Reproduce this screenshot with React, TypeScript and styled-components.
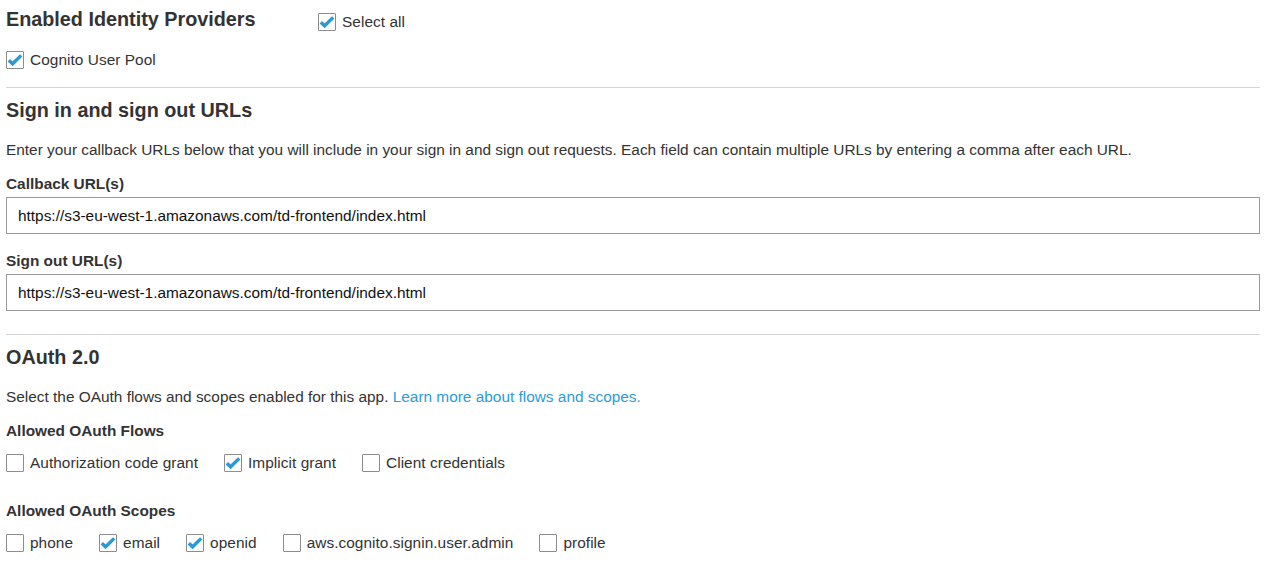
import React, { useState } from 'react';
import styled, { createGlobalStyle } from 'styled-components';

const GlobalStyle = createGlobalStyle`
  html, body {
    margin: 0;
    padding: 0;
    background: #ffffff;
  }
  body {
    font-family: "Liberation Sans", Arial, sans-serif;
    color: #333333;
    font-size: 15.4px;
  }
`;

const Page = styled.div`
  padding: 0 18px 0 6px;
`;

const TopRow = styled.div`
  display: flex;
  align-items: flex-start;
`;

const Heading = styled.h2<{ $top?: number }>`
  margin: ${p => p.$top ?? 10}px 0 0 0;
  font-size: 19.8px;
  line-height: 24px;
  font-weight: bold;
  color: #333333;
`;

const TopHeading = styled(Heading)`
  width: 312px;
  flex-shrink: 0;
`;

const Divider = styled.hr<{ $top: number }>`
  border: none;
  border-top: 1px solid #d5d5d5;
  margin: ${p => p.$top}px 0 0 0;
  height: 0;
`;

const Paragraph = styled.p`
  margin: 18px 0 0 0;
  line-height: 20px;
  font-size: 15.4px;
`;

const Link = styled.a`
  color: #2b9cd8;
  text-decoration: none;
`;

const Label = styled.div<{ $top: number }>`
  margin-top: ${p => p.$top}px;
  font-weight: bold;
  line-height: 20px;
  font-size: 15.4px;
`;

const TextInput = styled.input`
  display: block;
  box-sizing: border-box;
  width: 100%;
  height: 37px;
  margin-top: 3px;
  padding: 0 11px;
  border: 1px solid #9a9a9a;
  border-radius: 0;
  font-family: "Liberation Sans", Arial, sans-serif;
  font-size: 15.4px;
  color: #111111;
  outline: none;
`;

const CheckRow = styled.div<{ $top: number }>`
  display: flex;
  align-items: center;
  gap: 26px;
  margin-top: ${p => p.$top}px;
`;

const CheckItem = styled.label<{ $top?: number }>`
  display: inline-flex;
  align-items: center;
  gap: 6px;
  height: 18px;
  margin-top: ${p => p.$top ?? 0}px;
  cursor: pointer;
  font-size: 15.4px;
  letter-spacing: 0.05px;
  color: #333333;
  white-space: nowrap;
`;

const Box = styled.span`
  box-sizing: border-box;
  width: 18px;
  height: 18px;
  border: 1px solid #8d8d8d;
  border-radius: 1px;
  background: #ffffff;
  display: inline-flex;
  align-items: center;
  justify-content: center;
  flex-shrink: 0;
`;

const Check: React.FC<{ label: string; initial: boolean; top?: number }> = ({ label, initial, top }) => {
  const [on, setOn] = useState(initial);
  return (
    <CheckItem $top={top} onClick={() => setOn(!on)}>
      <Box>
        {on && (
          <svg width="16" height="16" viewBox="0 0 16 16">
            <path d="M1.8 8.2 L5.6 11.8 L14.2 3.4" fill="none" stroke="#2a9ad6" strokeWidth="3.4" strokeLinecap="butt" strokeLinejoin="miter" />
          </svg>
        )}
      </Box>
      <span>{label}</span>
    </CheckItem>
  );
};

const url = 'https://s3-eu-west-1.amazonaws.com/td-frontend/index.html';

const App: React.FC = () => {
  return (
    <Page>
      <GlobalStyle />
      <TopRow>
        <TopHeading $top={7}>Enabled Identity Providers</TopHeading>
        <Check label="Select all" initial={true} top={13} />
      </TopRow>
      <CheckRow $top={20}>
        <Check label="Cognito User Pool" initial={true} />
      </CheckRow>

      <Divider $top={18} />
      <Heading>Sign in and sign out URLs</Heading>
      <Paragraph>
        Enter your callback URLs below that you will include in your sign in and sign out requests. Each field can contain multiple URLs by entering a comma after each URL.
      </Paragraph>
      <Label $top={14}>Callback URL(s)</Label>
      <TextInput defaultValue={url} />
      <Label $top={17}>Sign out URL(s)</Label>
      <TextInput defaultValue={url} />

      <Divider $top={23} />
      <Heading>OAuth 2.0</Heading>
      <Paragraph>
        Select the OAuth flows and scopes enabled for this app. <Link href="#">Learn more about flows and scopes.</Link>
      </Paragraph>
      <Label $top={14}>Allowed OAuth Flows</Label>
      <CheckRow $top={13}>
        <Check label="Authorization code grant" initial={false} />
        <Check label="Implicit grant" initial={true} />
        <Check label="Client credentials" initial={false} />
      </CheckRow>
      <Label $top={29}>Allowed OAuth Scopes</Label>
      <CheckRow $top={13}>
        <Check label="phone" initial={false} />
        <Check label="email" initial={true} />
        <Check label="openid" initial={true} />
        <Check label="aws.cognito.signin.user.admin" initial={false} />
        <Check label="profile" initial={false} />
      </CheckRow>
    </Page>
  );
};

export default App;
